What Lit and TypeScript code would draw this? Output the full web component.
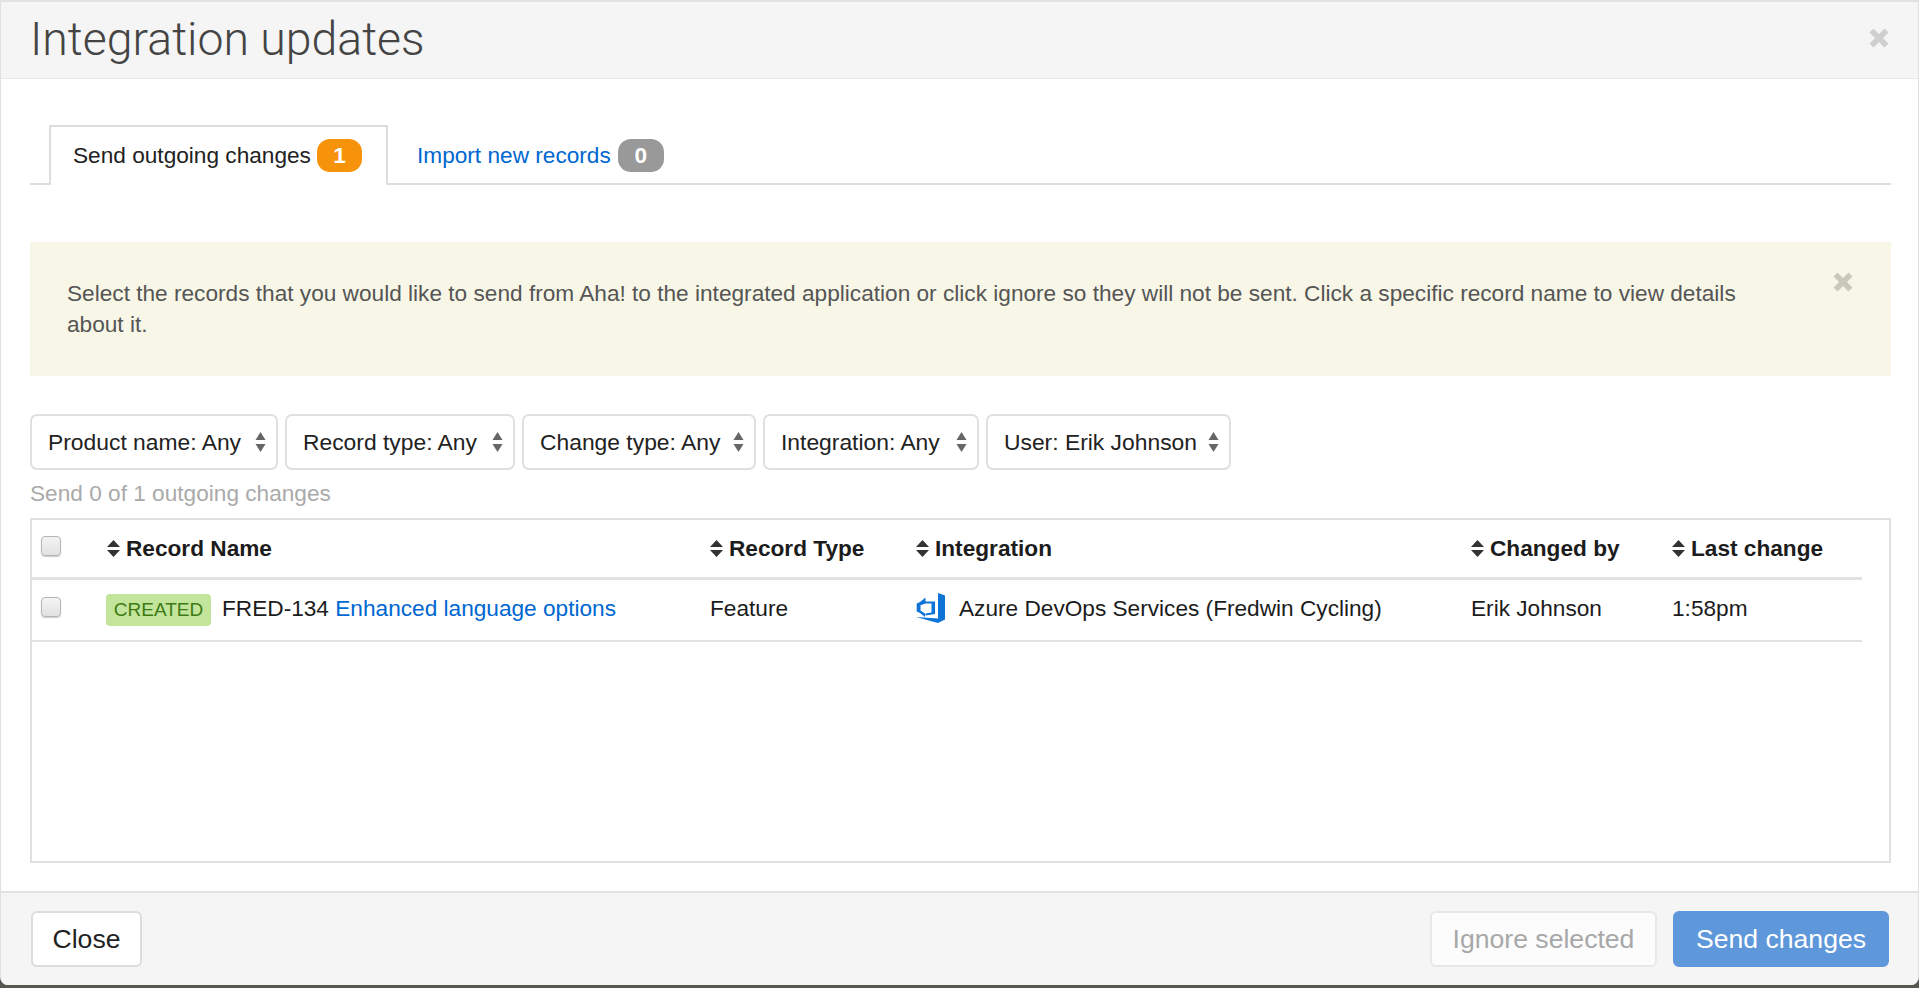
import { LitElement, html, css } from "lit";
import { customElement } from "lit/decorators.js";

const sortIcon = html`<svg class="sort" viewBox="0 0 13 17" width="13" height="17"><path d="M6.500 0 13 7H0ZM6.500 17 13 10H0Z"/></svg>`;
const selectArrows = html`<svg class="arrows" viewBox="0 0 11 20" width="11" height="20"><path d="M5.500 0 10.500 8H.5ZM5.500 20 10.500 12H.5Z"/></svg>`;
const xIcon = html`<svg class="x" viewBox="0 0 20 20" width="20" height="20"><path d="M4.500 0.500 10 6 15.500 0.500 19.500 4.500 14 10 19.500 15.500 15.500 19.500 10 14 4.500 19.500 0.500 15.500 6 10 0.500 4.500Z"/></svg>`;
const azure = html`<svg class="azure" viewBox="0 0 30 30" width="30" height="30"><path fill="#0e74d6" d="M22 0 29 2.500V26.500L22 30 0 24 22 25.500ZM9.500 4.500 4 9 .7 10.500V18.500L4 20 9 24V20.500L4.500 17.500V12.200L9.500 10.500H15.500V19.500L9.500 20.500V22.500L19 21V8.500H9.500Z"/></svg>`;

@customElement("app-root")
export class AppRoot extends LitElement {
  static styles = css`
    :host {
      display: block;
      height: 988px;
      width: 1919px;
      box-sizing: border-box;
      background: #55564e;
      font-family: "Liberation Sans", Arial, sans-serif;
      font-size: 22.65px;
      color: #222;
      overflow: hidden;
    }
    .modal {
      height: 985px;
      box-sizing: border-box;
      background: #fff;
      border-top: 2px solid #e2e2de;
      border-left: 1px solid #e0e0e0;
      border-right: 1px solid #e0e0e0;
      border-radius: 0 0 8px 8px;
      display: flex;
      flex-direction: column;
      overflow: hidden;
    }
    .head {
      height: 77px;
      flex: none;
      box-sizing: border-box;
      background: #f5f5f5;
      border-bottom: 1px solid #e8e8e8;
      display: flex;
      align-items: center;
      justify-content: space-between;
      padding: 0 29px 0 29px;
    }
    .head h1 {
      margin: 0 0 2px;
      font-family: Roboto, "Liberation Sans", sans-serif;
      font-size: 46.400px;
      font-weight: 300;
      color: #444;
    }
    .x { display: block; }
    .head .x { fill: #cfcfcf; margin-top: -5px; }
    .body {
      flex: 1;
      padding: 46px 27px 28px 29px;
      display: flex;
      flex-direction: column;
      min-height: 0;
    }
    .tabs {
      display: flex;
      height: 60px;
      box-sizing: border-box;
      border-bottom: 2px solid #ddd;
      padding-left: 19px;
      flex: none;
    }
    .tab {
      display: flex;
      align-items: center;
      gap: 7px;
      height: 60px;
      box-sizing: border-box;
      padding: 0 24px 0 29px;
      white-space: nowrap;
    }
    .tab.active {
      width: 339px;
      gap: 6px;
      padding: 0 24px 2px 22px;
      background: #fff;
      border: 2px solid #ddd;
      border-bottom: 0;
    }
    a { color: #0067d1; text-decoration: none; }
    .badge {
      display: inline-flex;
      align-items: center;
      justify-content: center;
      width: 46px;
      height: 33px;
      border-radius: 13px;
      color: #fff;
      font-weight: 700;
    }
    .badge.orange { background: #f7930a; width: 47px; }
    .badge.gray { background: #999; }
    .alert {
      margin-top: 57px;
      height: 134px;
      flex: none;
      box-sizing: border-box;
      background: #f8f7e7;
      color: #555;
      padding: 36px 38px 0 37px;
      display: flex;
      justify-content: space-between;
      gap: 60px;
      line-height: 30.6px;
    }
    .alert .x { fill: #c9c9bb; flex: none; margin-top: -6px; }
    .filters {
      margin-top: 38px;
      display: flex;
      gap: 7px;
      flex: none;
    }
    .select {
      height: 56px;
      box-sizing: border-box;
      border: 2px solid #e0e0e0;
      border-radius: 7px;
      background: #fff;
      display: flex;
      align-items: center;
      justify-content: space-between;
      padding: 0 10px 0 16px;
      color: #222;
      font-size: 22.85px;
      white-space: nowrap;
    }
    .arrows { fill: #666; display: block; flex: none; }
    .count {
      margin-top: 11px;
      color: #aaa;
      height: 24px;
      line-height: 24px;
      flex: none;
    }
    .table {
      margin-top: 13px;
      flex: 1;
      min-height: 0;
      box-sizing: border-box;
      border: 2px solid #e0e0e0;
      padding-right: 27px;
    }
    .row {
      display: grid;
      grid-template-columns: 74px 603px 206px 555px 201px 1fr;
      align-items: center;
      color: #1c1c1c;
      box-sizing: border-box;
    }
    .row.th {
      height: 60px;
      border-bottom: 3px solid #e2e2e2;
      font-weight: 700;
    }
    .row.td {
      height: 62px;
      border-bottom: 2px solid #e2e2e2;
    }
    .cell { display: flex; align-items: center; padding-left: 1px; }
    .td .cell { padding-bottom: 4px; }
    .sort { fill: #333; margin-right: 6px; flex: none; }
    .cb {
      width: 20px;
      height: 20px;
      margin-left: 9px;
      margin-top: -6px;
      box-sizing: border-box;
      border: 1px solid #b5b5b5;
      border-radius: 4px;
      background: linear-gradient(#f4f4f4, #e2e2e2);
      box-shadow: 0 1px 1px rgba(0, 0, 0, 0.2);
    }
    .created {
      background: #c2e59b;
      color: #3d7a14;
      border-radius: 4px;
      width: 105px;
      height: 32px;
      display: inline-flex;
      align-items: center;
      justify-content: center;
      font-size: 19px;
      margin: 4px 11px 0 0;
    }
    .td .name { white-space: pre; padding-left: 0; }
    .azure { margin-right: 13px; flex: none; }
    .foot {
      height: 94px;
      flex: none;
      box-sizing: border-box;
      background: #f5f5f5;
      border-top: 2px solid #e2e2e2;
      display: flex;
      align-items: center;
      padding: 0 29px 0 30px;
      gap: 16px;
    }
    .btn {
      height: 56px;
      box-sizing: border-box;
      border-radius: 6px;
      border: 2px solid #ddd;
      background: #fff;
      font-family: inherit;
      font-size: 26.600px;
      color: #222;
      padding: 0;
    }
    .btn.close { width: 111px; margin-right: auto; }
    .btn.ignore { width: 227px; background: #fcfcfc; border-color: #e8e8e8; color: #a8a8a8; }
    .btn.send { width: 216px; background: #5e98da; border-color: #5e98da; color: #fff; }
  `;

  private select(label: string, width: number) {
    return html`<div class="select" style="width:${width}px"><span>${label}</span>${selectArrows}</div>`;
  }

  private th(label: string) {
    return html`<div class="cell">${sortIcon}<span>${label}</span></div>`;
  }

  render() {
    return html`
      <div class="modal">
        <div class="head"><h1>Integration updates</h1>${xIcon}</div>
        <div class="body">
          <div class="tabs">
            <div class="tab active"><span>Send outgoing changes</span><span class="badge orange">1</span></div>
            <div class="tab"><a href="#">Import new records</a><span class="badge gray">0</span></div>
          </div>
          <div class="alert">
            <span>Select the records that you would like to send from Aha! to the integrated application or click ignore so they will not be sent. Click a specific record name to view details about it.</span>
            ${xIcon}
          </div>
          <div class="filters">
            ${this.select("Product name: Any", 248)}
            ${this.select("Record type: Any", 230)}
            ${this.select("Change type: Any", 234)}
            ${this.select("Integration: Any", 216)}
            ${this.select("User: Erik Johnson", 245)}
          </div>
          <div class="count">Send 0 of 1 outgoing changes</div>
          <div class="table">
            <div class="row th">
              <div class="cb"></div>
              ${this.th("Record Name")}
              ${this.th("Record Type")}
              ${this.th("Integration")}
              ${this.th("Changed by")}
              ${this.th("Last change")}
            </div>
            <div class="row td">
              <div class="cb"></div>
              <div class="cell name"><span class="created">CREATED</span><span>FRED-134 </span><a href="#">Enhanced language options</a></div>
              <div class="cell">Feature</div>
              <div class="cell">${azure}<span>Azure DevOps Services (Fredwin Cycling)</span></div>
              <div class="cell">Erik Johnson</div>
              <div class="cell">1:58pm</div>
            </div>
          </div>
        </div>
        <div class="foot">
          <button class="btn close">Close</button>
          <button class="btn ignore">Ignore selected</button>
          <button class="btn send">Send changes</button>
        </div>
      </div>
    `;
  }
}
